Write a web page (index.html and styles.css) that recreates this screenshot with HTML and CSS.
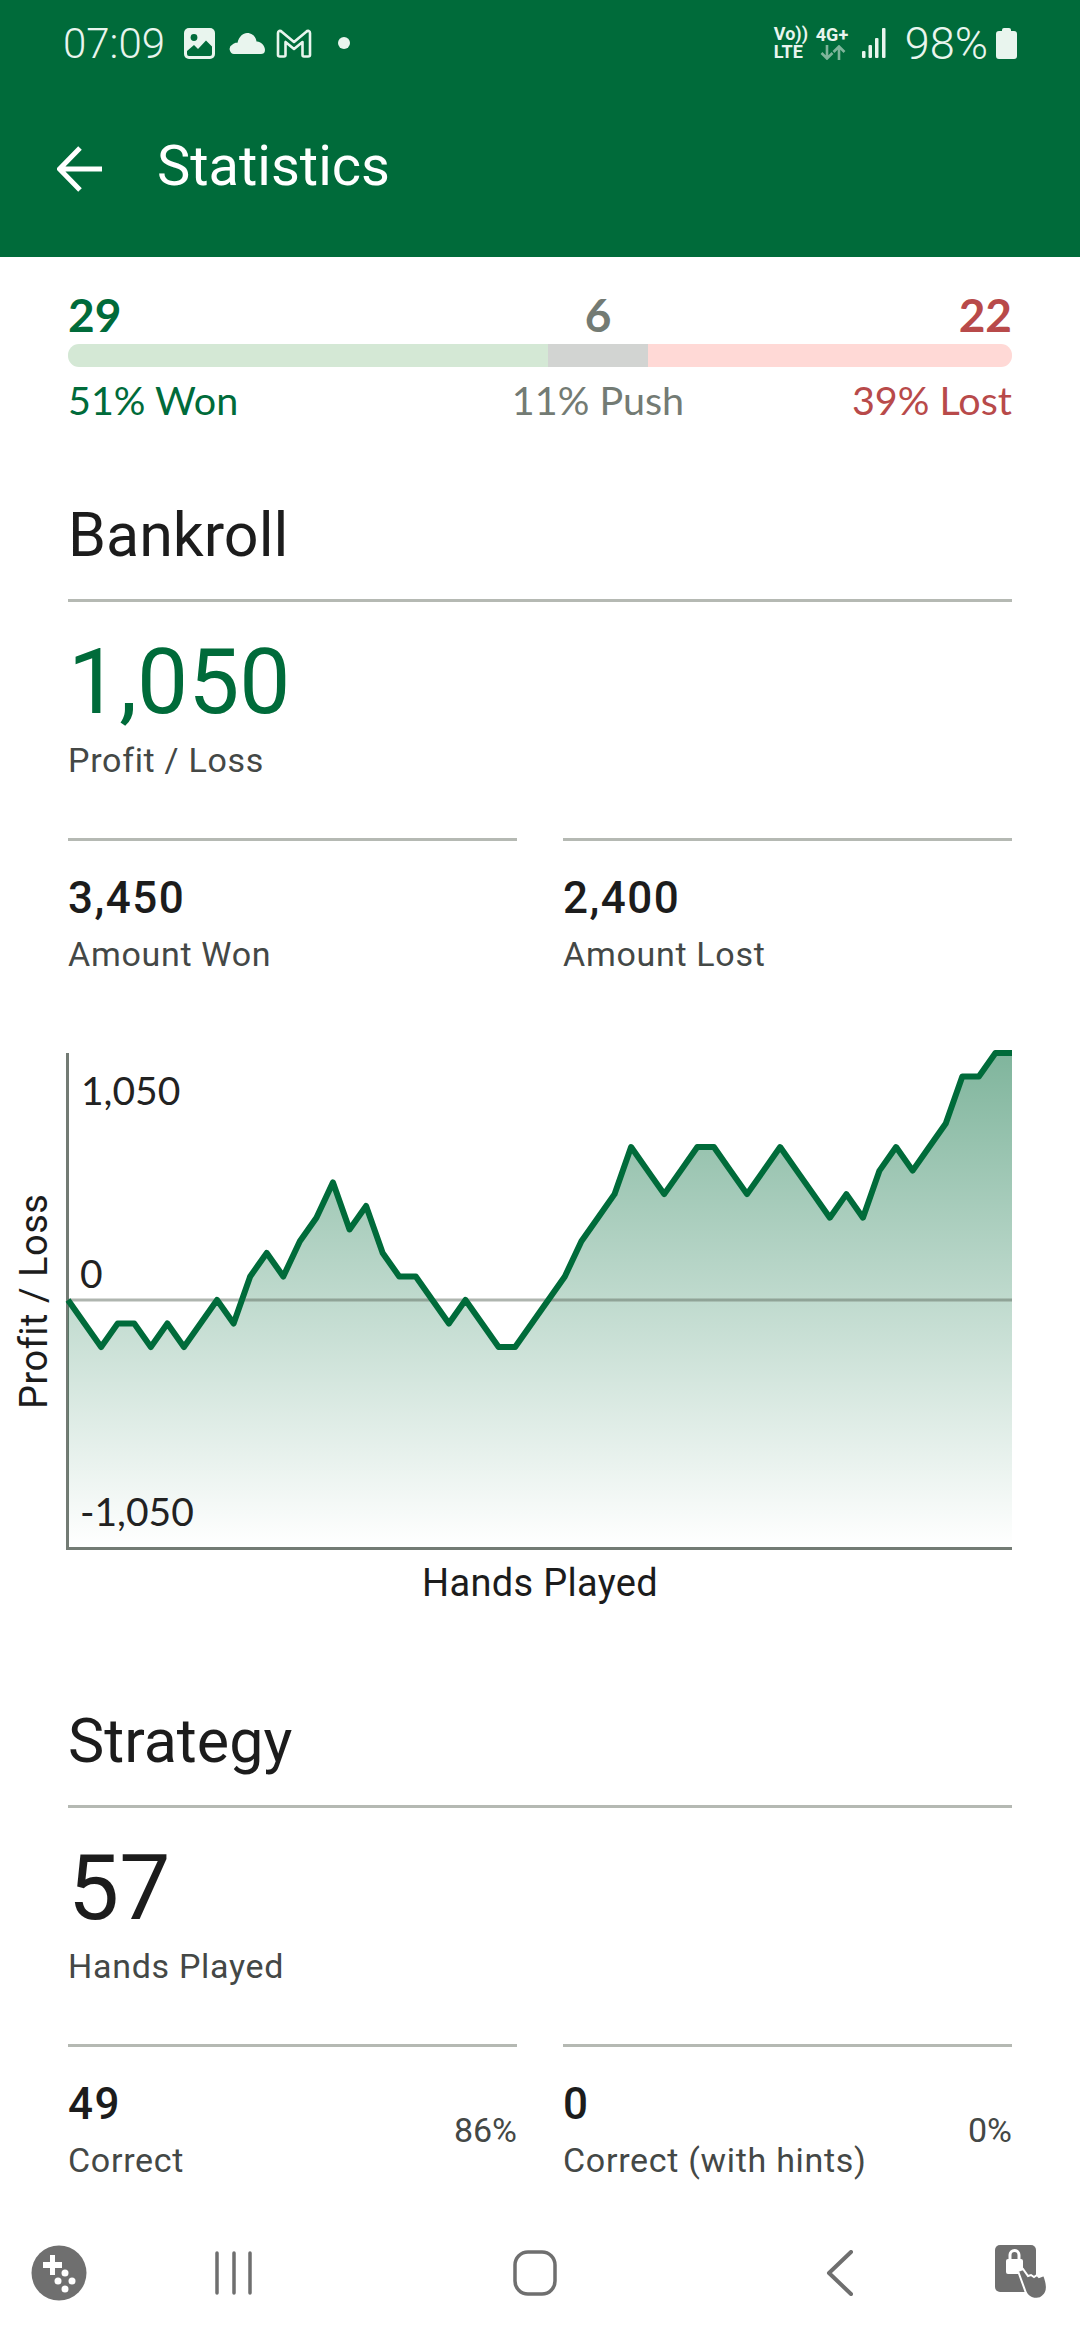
FILE: index.html
```html
<!DOCTYPE html>
<html lang="en">

<head>
    <meta charset="UTF-8">
    <meta name="viewport" content="width=device-width, initial-scale=1.0">
    <title>Statistics</title>
    <link rel="stylesheet" href="styles.css">
</head>

<body>
    <header class="app-header">
        <div class="status-bar">
            <span class="clock">07:09</span>
            <svg class="st-icon" width="31" height="31" viewBox="0 0 31 31">
                <rect width="31" height="31" rx="5" fill="#e9f5ee"/>
                <circle cx="10" cy="9.500" r="3.400" fill="#006b3a"/>
                <path d="M3 23L10 17L14 21L22 12.500L28 18.500V26A2 2 0 0 1 26 28H5A2 2 0 0 1 3 26Z" fill="#006b3a"/>
            </svg>
            <svg class="st-icon cloud" width="36" height="21" viewBox="0 0 36 21">
                <path d="M6 21A5 5 0 0 1 3.500 11.500C5 10 7 9.500 8.500 9.800C10 3.500 14 0 18 0C23 0 27 3.500 27.500 8.500C31 8 36 12 36 17C36 20 34 21 32 21Z" fill="#e9f5ee"/>
            </svg>
            <svg class="st-icon gmail" width="36" height="29" viewBox="0 0 36 29">
                <path d="M2 26V4C2 2 4 1 6 3L18 13L30 3C32 1 34 2 34 4V26C34 27 33 27.500 32 27.500H28C27 27.500 26.500 27 26.500 26V13L18 20L9.500 13V26C9.500 27 9 27.500 8 27.500H4C3 27.500 2 27 2 26Z" fill="none" stroke="#e9f5ee" stroke-width="2.600" stroke-linejoin="round"/>
            </svg>
            <span class="st-dot"></span>
            <span class="status-right">
                <span class="volte">Vo))<br>LTE</span>
                <span class="net">4G+
                    <svg class="net-arrows" width="26" height="15" viewBox="0 0 26 15">
                        <path d="M7 0V13M1.500 8L7 13.500L12.500 8" fill="none" stroke="#7fb59b" stroke-width="2.600"/>
                        <path d="M19 15V2M13.500 7L19 1.500L24.500 7" fill="none" stroke="#7fb59b" stroke-width="2.600"/>
                    </svg>
                </span>
                <svg class="signal" width="28" height="30" viewBox="0 0 28 30">
                    <rect x="0" y="23" width="3.500" height="7" rx="1" fill="#e9f5ee"/>
                    <rect x="6.500" y="17" width="3.500" height="13" rx="1" fill="#e9f5ee"/>
                    <rect x="13" y="10" width="3.500" height="20" rx="1" fill="#e9f5ee"/>
                    <rect x="20" y="0" width="3.500" height="30" rx="1" fill="#e9f5ee"/>
                </svg>
                <span class="battery-text">98%</span>
                <svg width="21" height="31" viewBox="0 0 21 31">
                    <path d="M6 2A2 2 0 0 1 8 0H13A2 2 0 0 1 15 2V3H18A3 3 0 0 1 21 6V28A3 3 0 0 1 18 31H3A3 3 0 0 1 0 28V6A3 3 0 0 1 3 3H6Z" fill="#e9f5ee"/>
                </svg>
            </span>
        </div>
        <div class="toolbar">
            <svg class="back-arrow" width="46" height="46" viewBox="0 0 46 46">
                <path d="M45 23H3M23 2L2.500 23L23 44" fill="none" stroke="#fff" stroke-width="5"/>
            </svg>
            <h1 class="toolbar-title">Statistics</h1>
        </div>
    </header>

    <main class="content">
        <div class="record">
            <div class="record-row record-counts">
                <span class="won">29</span>
                <span class="push">6</span>
                <span class="lost">22</span>
            </div>
            <div class="record-bar">
                <span class="seg-won"></span>
                <span class="seg-push"></span>
                <span class="seg-lost"></span>
            </div>
            <div class="record-row record-labels">
                <span class="won">51% Won</span>
                <span class="push">11% Push</span>
                <span class="lost">39% Lost</span>
            </div>
        </div>

        <section class="bankroll">
            <h2 class="section-title">Bankroll</h2>
            <div class="big-stat">
                <div class="big-value green">1,050</div>
                <div class="stat-label">Profit / Loss</div>
            </div>
            <div class="stat-grid">
                <div class="stat">
                    <div class="stat-value">3,450</div>
                    <div class="stat-label">Amount Won</div>
                </div>
                <div class="stat">
                    <div class="stat-value">2,400</div>
                    <div class="stat-label">Amount Lost</div>
                </div>
            </div>

            <div class="chart">
                <div class="y-title">Profit / Loss</div>
                <div class="plot">
                    <svg class="plot-svg" viewBox="0 -10.5 57 21" preserveAspectRatio="none">
                        <defs>
                            <linearGradient id="areaFade" gradientUnits="userSpaceOnUse" x1="0" y1="-10.5" x2="0" y2="10.5">
                                <stop offset="0" stop-color="#006b3a" stop-opacity="0.5"/>
                                <stop offset="1" stop-color="#006b3a" stop-opacity="0"/>
                            </linearGradient>
                        </defs>
                        <polygon fill="url(#areaFade)" points="0,10.5 0,0 1,1 2,2 3,1 4,1 5,2 6,1 7,2 8,1 9,0 10,1 11,-1 12,-2 13,-1 14,-2.5 15,-3.5 16,-5 17,-3 18,-4 19,-2 20,-1 21,-1 22,0 23,1 24,0 25,1 26,2 27,2 28,1 29,0 30,-1 31,-2.5 32,-3.5 33,-4.5 34,-6.5 35,-5.5 36,-4.5 37,-5.5 38,-6.5 39,-6.5 40,-5.5 41,-4.5 42,-5.5 43,-6.5 44,-5.5 45,-4.5 46,-3.5 47,-4.5 48,-3.5 49,-5.5 50,-6.5 51,-5.5 52,-6.5 53,-7.5 54,-9.5 55,-9.5 56,-10.5 57,-10.5 57,10.5"/>
                        <line class="zero-line" x1="0" y1="0" x2="57" y2="0"/>
                        <polyline class="profit-line" points="0,0 1,1 2,2 3,1 4,1 5,2 6,1 7,2 8,1 9,0 10,1 11,-1 12,-2 13,-1 14,-2.5 15,-3.5 16,-5 17,-3 18,-4 19,-2 20,-1 21,-1 22,0 23,1 24,0 25,1 26,2 27,2 28,1 29,0 30,-1 31,-2.5 32,-3.5 33,-4.5 34,-6.5 35,-5.5 36,-4.5 37,-5.5 38,-6.5 39,-6.5 40,-5.5 41,-4.5 42,-5.5 43,-6.5 44,-5.5 45,-4.5 46,-3.5 47,-4.5 48,-3.5 49,-5.5 50,-6.5 51,-5.5 52,-6.5 53,-7.5 54,-9.5 55,-9.5 56,-10.5 57,-10.5"/>
                    </svg>
                    <span class="tick tick-top">1,050</span>
                    <span class="tick tick-zero">0</span>
                    <span class="tick tick-bottom">-1,050</span>
                </div>
            </div>
            <div class="x-title">Hands Played</div>
        </section>

        <section class="strategy">
            <h2 class="section-title">Strategy</h2>
            <div class="big-stat">
                <div class="big-value">57</div>
                <div class="stat-label">Hands Played</div>
            </div>
            <div class="stat-grid">
                <div class="stat stat-split">
                    <div>
                        <div class="stat-value">49</div>
                        <div class="stat-label">Correct</div>
                    </div>
                    <div class="stat-pct">86%</div>
                </div>
                <div class="stat stat-split">
                    <div>
                        <div class="stat-value">0</div>
                        <div class="stat-label">Correct (with hints)</div>
                    </div>
                    <div class="stat-pct">0%</div>
                </div>
            </div>
        </section>
    </main>

    <nav class="nav-bar">
        <svg class="nav-game" width="56" height="56" viewBox="0 0 56 56">
            <ellipse cx="28" cy="28" rx="27.500" ry="27.500" fill="#6f6f6f"/>
            <path d="M19 10H24V17H31V23H24V30H19V23H12V17H19Z" fill="#fff"/>
            <circle cx="34" cy="28" r="3.500" fill="#fff"/>
            <circle cx="27" cy="36" r="3.500" fill="#fff"/>
            <circle cx="41" cy="36" r="3.500" fill="#fff"/>
            <circle cx="34" cy="44" r="3.500" fill="#fff"/>
        </svg>
        <svg class="nav-recents" width="40" height="44" viewBox="0 0 40 44">
            <path d="M3 2V42M20 2V42M36 2V42" fill="none" stroke="#6f6f6f" stroke-width="3.500" stroke-linecap="round"/>
        </svg>
        <svg class="nav-home" width="44" height="46" viewBox="0 0 44 46">
            <rect x="2" y="2" width="40" height="42" rx="13" fill="none" stroke="#6f6f6f" stroke-width="3.500"/>
        </svg>
        <svg class="nav-back" width="28" height="46" viewBox="0 0 28 46">
            <path d="M25 2L3 23L25 44" fill="none" stroke="#6f6f6f" stroke-width="4" stroke-linecap="round" stroke-linejoin="round"/>
        </svg>
        <svg class="nav-lock" width="54" height="56" viewBox="0 0 54 56">
            <rect x="0" y="0" width="41" height="47" rx="5" fill="#6f6f6f"/>
            <rect x="11" y="14" width="17" height="15" rx="2" fill="#fff"/>
            <path d="M15 15V10A4.500 4.500 0 0 1 24 10V15" fill="none" stroke="#fff" stroke-width="3"/>
            <path d="M23 26L31 48C34 54 44 56 48 51C54 46 52 38 49 30L44 32L42 30L39 32L36 30L33 31L28 24Z" fill="#6f6f6f" stroke="#fff" stroke-width="2"/>
        </svg>
    </nav>
</body>

</html>
```

FILE: styles.css
```css
* {
    box-sizing: border-box;
}

body {
    width: 1080px;
    height: 2340px;
    margin: 0;
    display: flex;
    flex-direction: column;
    overflow: hidden;
    background-color: #fff;
    color: #1c1c1c;
    font-family: Roboto, sans-serif;
}

/* header */
.app-header {
    height: 257px;
    flex-shrink: 0;
    background-color: #006b3a;
}

.status-bar {
    height: 86px;
    padding: 0 63px;
    display: flex;
    align-items: center;
    color: #e9f5ee;
}

.clock {
    font-size: 42px;
    font-weight: 300;
    margin-right: 19px;
}

.st-icon {
    margin-right: 14px;
    flex-shrink: 0;
}

.cloud {
    margin-right: 11px;
}

.st-dot {
    width: 12px;
    height: 12px;
    margin-left: 12px;
    border-radius: 50%;
    background-color: #e9f5ee;
}

.status-right {
    margin-left: auto;
    display: flex;
    align-items: center;
}

.volte {
    width: 42px;
    font-size: 18px;
    font-weight: 700;
    line-height: 18px;
}

.net {
    width: 46px;
    display: flex;
    flex-direction: column;
    font-size: 18px;
    font-weight: 700;
    line-height: 18px;
}

.net-arrows {
    margin: 1px 0 0 4px;
}

.signal {
    margin-right: 15px;
}

.battery-text {
    font-size: 45px;
    font-weight: 300;
    margin-right: 8px;
}

.toolbar {
    height: 162px;
    padding-left: 57px;
    display: flex;
    align-items: center;
}

.back-arrow {
    flex-shrink: 0;
    margin-top: 4px;
}

.toolbar-title {
    margin: 0 0 3px 54px;
    color: #fff;
    font-size: 56px;
    font-weight: 400;
}

/* content */
.content {
    flex: 1;
    min-height: 0;
    padding: 0 68px;
    overflow: hidden;
}

.record {
    padding-top: 33px;
    font-family: Lato, sans-serif;
}

.record-row {
    display: grid;
    grid-template-columns: 480px 100px 364px;
    white-space: nowrap;
}

.record-row .push {
    justify-self: center;
}

.record-row .lost {
    justify-self: end;
}

.record-counts {
    font-size: 46px;
    font-weight: 700;
    line-height: 50px;
}

.record-labels {
    margin-top: 11px;
    font-size: 39.500px;
    line-height: 44px;
}

.won {
    color: #006b3a;
}

.push {
    color: #737b74;
}

.lost {
    color: #b84a4a;
}

.record-bar {
    height: 23px;
    margin-top: 4px;
    display: grid;
    grid-template-columns: 480px 100px 364px;
    border-radius: 11px;
    overflow: hidden;
}

.seg-won {
    background-color: #d4e8d5;
}

.seg-push {
    background-color: #d2d4d2;
}

.seg-lost {
    background-color: #ffd9d6;
}

.section-title {
    margin: 0;
    padding-bottom: 29px;
    border-bottom: 3px solid #b5b9b3;
    font-size: 61px;
    font-weight: 400;
    line-height: 70px;
}

.bankroll {
    margin-top: 78px;
}

.big-stat {
    padding-top: 30px;
}

.big-value {
    margin-bottom: 7px;
    font-size: 91px;
    line-height: 100px;
    font-weight: 400;
}

.green {
    color: #006b3a;
}

.stat-label {
    color: #444846;
    font-size: 34px;
    letter-spacing: 0.7px;
    line-height: 42px;
}

.stat-grid {
    margin-top: 57px;
    display: grid;
    grid-template-columns: 449px 449px;
    gap: 46px;
}

.stat {
    padding-top: 32px;
    border-top: 3px solid #b5b9b3;
}

.stat-value {
    font-size: 44px;
    font-weight: 500;
    letter-spacing: 1.500px;
    line-height: 50px;
}

.stat .stat-label {
    margin-top: 10px;
}

.stat-split {
    display: flex;
    justify-content: space-between;
    align-items: center;
}

.stat-pct {
    color: #444846;
    font-size: 34px;
}

/* chart */
.chart {
    margin-top: 78px;
    margin-left: -56px;
    display: flex;
}

.y-title {
    width: 54px;
    padding-right: 2px;
    writing-mode: vertical-rl;
    transform: rotate(180deg);
    text-align: center;
    font-size: 38px;
    letter-spacing: 0.5px;
    line-height: 40px;
}

.plot {
    position: relative;
    flex: 1;
    height: 497px;
    border-left: 3px solid #737b74;
    border-bottom: 3px solid #737b74;
    font-family: Lato, sans-serif;
}

.plot-svg {
    display: block;
    width: calc(100% + 1px);
    height: 494px;
    margin-left: -1px;
    overflow: visible;
}

.zero-line {
    stroke: #5f6b60;
    stroke-opacity: 0.5;
    stroke-width: 3px;
    vector-effect: non-scaling-stroke;
}

.profit-line {
    fill: none;
    stroke: #006b3a;
    stroke-width: 6px;
    stroke-linejoin: round;
    vector-effect: non-scaling-stroke;
}

.tick {
    position: absolute;
    left: 12px;
    font-size: 39px;
    line-height: 40px;
    color: #222;
}

.tick-top {
    top: 17px;
}

.tick-zero {
    top: 200px;
    left: 11px;
}

.tick-bottom {
    top: 438px;
    left: 11px;
}

.x-title {
    margin-top: 11px;
    text-align: center;
    font-size: 38px;
    line-height: 44px;
    letter-spacing: 0.3px;
}

.strategy {
    margin-top: 101px;
}

/* system nav */
.nav-bar {
    height: 120px;
    flex-shrink: 0;
    padding: 0 31px 14px;
    display: flex;
    align-items: center;
    background-color: #fff;
}

.nav-recents {
    margin-left: 127px;
}

.nav-home {
    margin-left: 259px;
}

.nav-back {
    margin-left: 269px;
}

.nav-lock {
    margin-left: auto;
}
```
